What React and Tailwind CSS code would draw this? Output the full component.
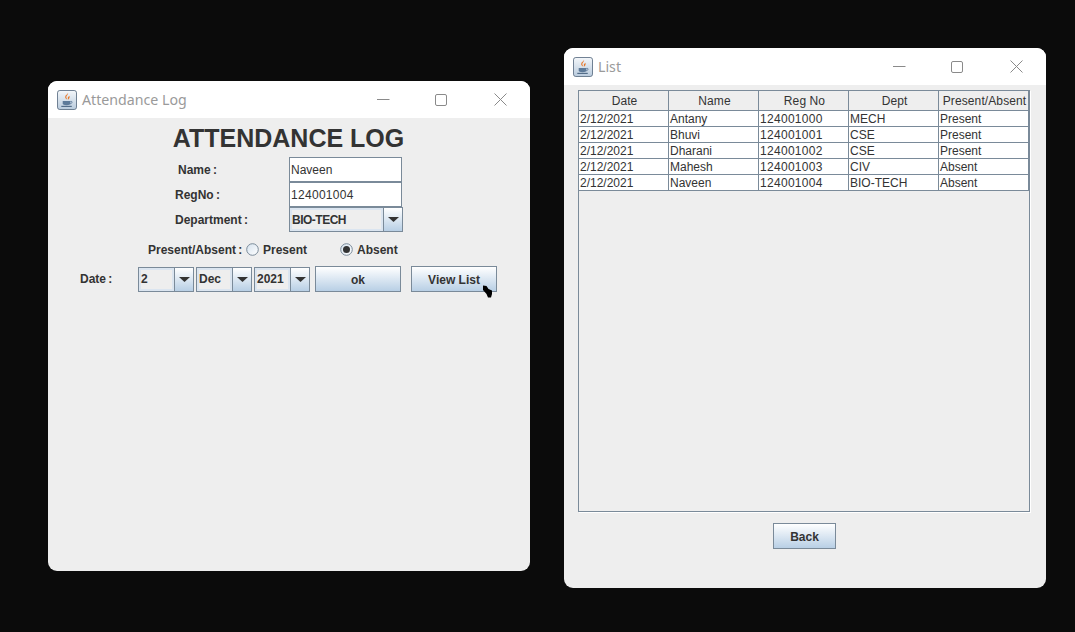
import React from 'react';

const rows = [
  ['2/12/2021', 'Antany', '124001000', 'MECH', 'Present'],
  ['2/12/2021', 'Bhuvi', '124001001', 'CSE', 'Present'],
  ['2/12/2021', 'Dharani', '124001002', 'CSE', 'Present'],
  ['2/12/2021', 'Mahesh', '124001003', 'CIV', 'Absent'],
  ['2/12/2021', 'Naveen', '124001004', 'BIO-TECH', 'Absent'],
];
const headers = ['Date', 'Name', 'Reg No', 'Dept', 'Present/Absent'];

const JavaIcon = () => (
  <svg width="20" height="20" viewBox="0 0 21 21" className="shrink-0">
    <defs>
      <linearGradient id="javaBg" x1="0" y1="0" x2="0" y2="1">
        <stop offset="0" stopColor="#f4f7fa" />
        <stop offset="1" stopColor="#b9cbdd" />
      </linearGradient>
    </defs>
    <rect x="0.5" y="0.5" width="20" height="20" rx="2.5" fill="url(#javaBg)" stroke="#66788c" />
    <path d="M11.5 3c1 2-2.5 3-1.5 5.5.3.8.8 1.2 1 1.7-1.8-1-3-2.3-2.2-4C9.400 5 11.500 4.500 11.500 3z" fill="#e8792b" />
    <path d="M13 6c-1 1-2 1.500-1.600 3 .2.500.3.800.1 1.200 1.500-1 2.200-2.500 1.500-4.200z" fill="#e8792b" />
    <path d="M6 11.500h8v2.500c0 1.500-1.500 2-4 2s-4-.5-4-2z" fill="#5d7a99" />
    <path d="M14 12h1.500c.8 1.500-.5 2.500-2 2.500" fill="none" stroke="#5d7a99" strokeWidth="0.9" />
    <path d="M4.500 17.200h11" stroke="#4d6884" strokeWidth="1.200" />
  </svg>
);

const TitleBar = ({ title, titleWidth }) => (
  <div className="flex h-[37px] items-center rounded-t-[9px] bg-white pl-[9px]">
    <JavaIcon />
    <span className="ml-[5px] font-['Noto_Sans',sans-serif] text-[14.2px] text-[#9a9a9a]" style={{ width: titleWidth }}>{title}</span>
    <svg width="13" height="13" viewBox="0 0 13 13" className="mr-[45px]">
      <path d="M0 6.500h12.500" stroke="#8a8a8a" />
    </svg>
    <svg width="12" height="12" viewBox="0 0 12 12" className="mr-[47px]">
      <rect x="0.500" y="0.500" width="11" height="11" rx="1.500" fill="none" stroke="#8a8a8a" />
    </svg>
    <svg width="13" height="13" viewBox="0 0 13 13">
      <path d="M0.500 0.500l12 12M12.500 0.500l-12 12" stroke="#8a8a8a" strokeWidth="1" />
    </svg>
  </div>
);

const TextField = ({ value, className = '' }) => (
  <div className={`flex h-[25px] w-[113px] items-center border border-[#7a8a99] bg-white pl-[1px] text-[12px] text-[#333333] ${className}`}>
    {value}
  </div>
);

// Swing style combo box with the metal gradient arrow button
const Combo = ({ value, width, className = '' }) => (
  <div className="flex h-[25px] border border-[#7a8a99] bg-[#eeeeee]" style={{ width }}>
    <div className={`flex flex-1 items-center border-2 border-[#dbe5f0] text-[12px] font-bold text-[#333333] ${className}`}>{value}</div>
    <div className="flex w-[19px] items-center justify-center border-l border-[#7a8a99] bg-gradient-to-b from-white to-[#b8cfe5]">
      <svg width="11" height="5" viewBox="0 0 11 5"><path d="M0 0h11L5.500 5z" fill="#333333" /></svg>
    </div>
  </div>
);

const MetalButton = ({ label, className }) => (
  <button className={`flex h-[26px] items-center justify-center border border-[#7a8a99] bg-gradient-to-b from-white to-[#b8cfe5] pt-[1px] text-[12px] font-bold text-[#333333] ${className}`}>
    {label}
  </button>
);

const Radio = ({ checked }) => (
  <svg width="13" height="13" viewBox="0 0 13 13" className="shrink-0">
    <defs>
      <linearGradient id="radioBg" x1="0" y1="0" x2="1" y2="1">
        <stop offset="0" stopColor="#d5e2ee" />
        <stop offset="1" stopColor="#ffffff" />
      </linearGradient>
    </defs>
    <circle cx="6.500" cy="6.500" r="5.800" fill="url(#radioBg)" stroke="#7a8a99" />
    {checked && <circle cx="6.500" cy="6.500" r="3.500" fill="#333333" />}
  </svg>
);

const FormRow = ({ label, labelLeft, children }) => (
  <div className="flex items-center">
    <span className="w-[241px] text-[12px] font-bold text-[#333333] [word-spacing:-1px]" style={{ paddingLeft: labelLeft }}>{label}</span>
    {children}
  </div>
);

const AttendanceWindow = () => (
  <div className="absolute left-[48px] top-[81px] h-[490px] w-[482px] rounded-[9px] bg-[#eeeeee]">
    <TitleBar title="Attendance Log" titleWidth={295} />
    <h1 className="mt-[3px] pr-[1px] text-center text-[25px] font-bold leading-[34px] text-[#333333]">ATTENDANCE LOG</h1>
    <div className="mt-[2px] flex flex-col">
      <FormRow label="Name :" labelLeft={130}><TextField value="Naveen" /></FormRow>
      <FormRow label="RegNo :" labelLeft={127}><TextField value="124001004" className="tracking-[0.3px]" /></FormRow>
      <FormRow label="Department :" labelLeft={127}><Combo value="BIO-TECH" width={114} className="tracking-[-0.5px]" /></FormRow>
    </div>
    <div className="mt-[10px] flex h-[15px] items-center pl-[100px] text-[12px] font-bold text-[#333333]">
      <span className="w-[98px] [word-spacing:-1px]">Present/Absent :</span>
      <Radio />
      <span className="ml-[4px] w-[77px]">Present</span>
      <Radio checked />
      <span className="ml-[4px]">Absent</span>
    </div>
    <div className="mt-[9px] flex items-center pl-[32px]">
      <span className="w-[58px] text-[12px] font-bold text-[#333333] [word-spacing:-1px]">Date :</span>
      <Combo value="2" width={56} />
      <div className="ml-[2px]"><Combo value="Dec" width={56} /></div>
      <div className="ml-[2px]"><Combo value="2021" width={56} /></div>
      <MetalButton label="ok" className="ml-[5px] w-[86px]" />
      <MetalButton label="View List" className="ml-[10px] w-[86px]" />
    </div>
  </div>
);

const ListWindow = () => (
  <div className="absolute left-[564px] top-[48px] h-[540px] w-[482px] rounded-[9px] bg-[#eeeeee]">
    <TitleBar title="List" titleWidth={295} />
    <div className="ml-[14px] mt-[5px] h-[422px] w-[452px] border border-[#7a8a99] shadow-[1px_1px_0_#ffffff]">
      <table className="w-[450px] table-fixed border-separate border-spacing-0 text-[12px] text-[#333333]">
        <thead>
          <tr className="h-[20px]">
            {headers.map((h) => (
              <th key={h} className="w-[90px] whitespace-nowrap border-b border-r border-[#7a8a99] bg-[#eeeeee] p-0 pl-[2px] pt-[1px] text-center font-normal tracking-[0.1px]">{h}</th>
            ))}
          </tr>
        </thead>
        <tbody>
          {rows.map((row) => (
            <tr key={row[2]} className="h-[16px]">
              {row.map((cell, i) => (
                <td key={i} className={`h-[16px] border-b border-r border-[#7a8a99] bg-white p-0 pl-[1px] pt-[1px] leading-[14px] ${i === 2 ? 'tracking-[0.3px]' : ''}`}>{cell}</td>
              ))}
            </tr>
          ))}
        </tbody>
      </table>
    </div>
    <div className="mt-[11px] flex justify-center pr-[1px]">
      <MetalButton label="Back" className="w-[63px]" />
    </div>
  </div>
);

const App = () => (
  <div className="relative h-[632px] w-[1075px] overflow-hidden bg-[#0b0b0b] font-['Liberation_Sans',Arial,sans-serif]">
    <AttendanceWindow />
    <ListWindow />
    {/* mouse pointer caught in the capture */}
    <svg className="absolute left-[482px] top-[285px]" width="11" height="13" viewBox="0 0 11 13">
      <path d="M1 0.500l3.500.5 2 3 3.500 1.500v3.500l-1 3.500H6L4.500 9 1 5z" fill="#000000" />
    </svg>
  </div>
);

export default App;
